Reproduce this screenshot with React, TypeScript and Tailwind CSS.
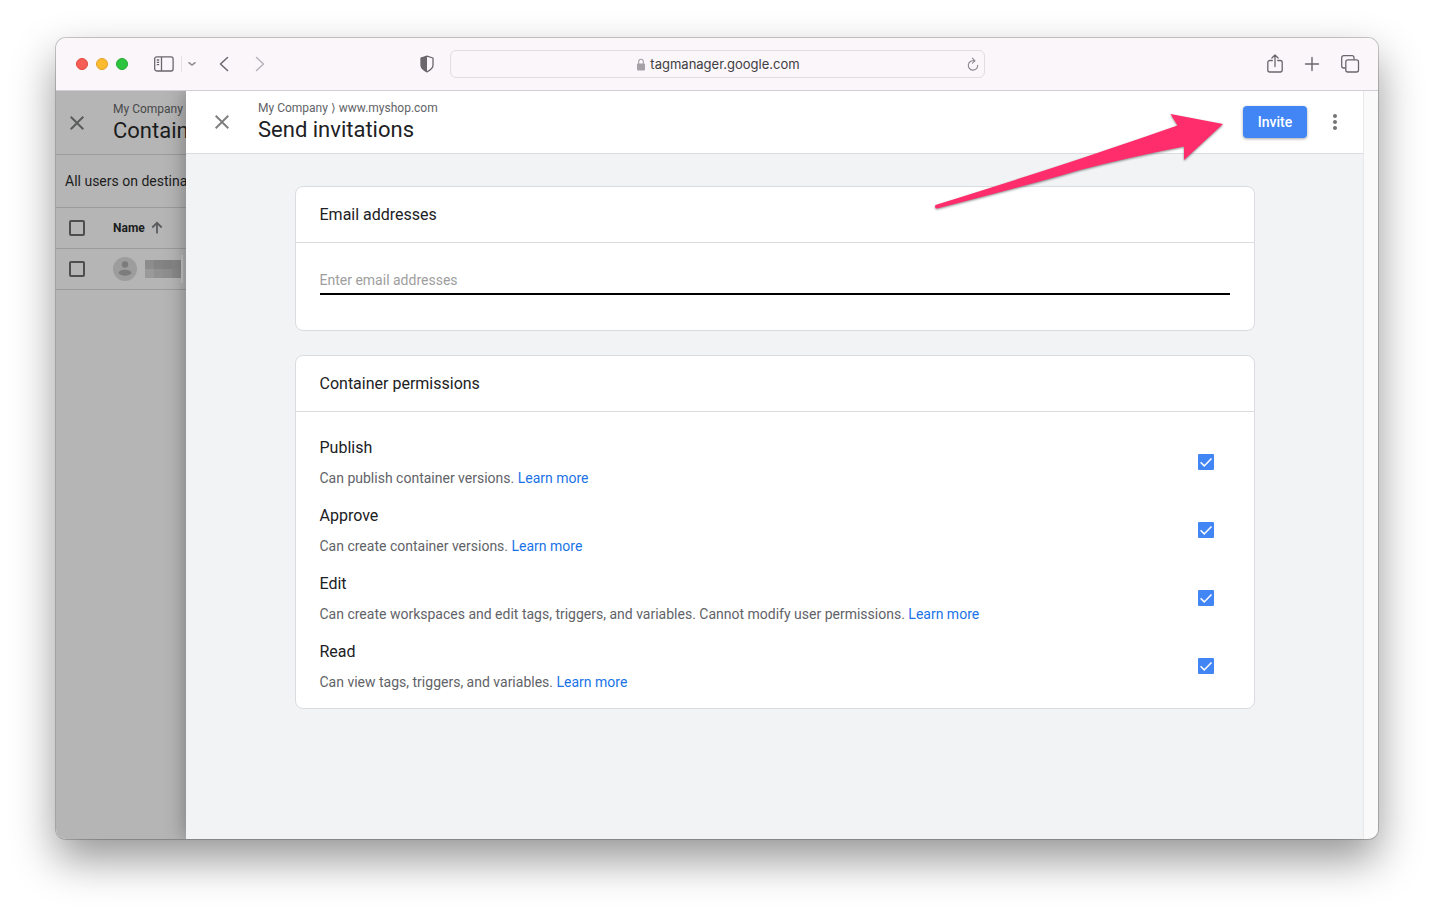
import { MdClose, MdMoreVert } from 'react-icons/md';

const permissions = [
  { id: 'publish', title: 'Publish', description: 'Can publish container versions.' },
  { id: 'approve', title: 'Approve', description: 'Can create container versions.' },
  {
    id: 'edit',
    title: 'Edit',
    description: 'Can create workspaces and edit tags, triggers, and variables. Cannot modify user permissions.',
  },
  { id: 'read', title: 'Read', description: 'Can view tags, triggers, and variables.' },
];

function BrowserToolbar() {
  return (
    <div className="relative z-10 grid h-[53px] shrink-0 grid-cols-[1fr_minmax(0,535px)_1fr] items-center border-b border-[#d2cfd3] bg-[#faf6fa] text-[#6b666c]">
      {/* Window and history controls */}
      <div className="flex items-center pl-5 pr-4">
        <div className="flex gap-2">
          <span className="h-3 w-3 rounded-full border border-[#e2463f] bg-[#f65e56]" />
          <span className="h-3 w-3 rounded-full border border-[#e3a12b] bg-[#fbbb2f]" />
          <span className="h-3 w-3 rounded-full border border-[#24a934] bg-[#2dc540]" />
        </div>
        <button aria-label="Sidebar" className="ml-[26px]">
          <svg width="20" height="16" viewBox="0 0 20 16" fill="none" stroke="currentColor" strokeWidth="1.3">
            <rect x="0.7" y="0.8" width="18.4" height="14.2" rx="2" />
            <path d="M7.5 1v14M2.8 4h2.4M2.8 6.3h2.4M2.8 8.6h2.4" />
          </svg>
        </button>
        <span className="ml-[7px] h-4 w-px bg-[#e6e2e6]" />
        <button aria-label="Tab groups" className="ml-[6px] text-[#8f8a90]">
          <svg width="8" height="6" viewBox="0 0 8 6" fill="none" stroke="currentColor" strokeWidth="1.5" strokeLinecap="round">
            <path d="M0.9 1.7L4 4.1l3.1-2.4" />
          </svg>
        </button>
        <button aria-label="Back" className="ml-[23px]">
          <svg width="10" height="16" viewBox="0 0 10 16" fill="none" stroke="currentColor" strokeWidth="1.5" strokeLinecap="round" strokeLinejoin="round">
            <path d="M8.5 1.5L1.5 8l7 6.5" />
          </svg>
        </button>
        <button aria-label="Forward" className="ml-[26px] text-[#b8b3b8]">
          <svg width="10" height="16" viewBox="0 0 10 16" fill="none" stroke="currentColor" strokeWidth="1.5" strokeLinecap="round" strokeLinejoin="round">
            <path d="M1.5 1.5L8.5 8l-7 6.5" />
          </svg>
        </button>
        <button aria-label="Privacy report" className="ml-auto">
          <svg width="14" height="18" viewBox="0 0 14 18">
            <path d="M7 1.2L1 3v7.2c0 3 3.2 5.2 6 6.6 2.800-1.400 6-3.600 6-6.600V3z" fill="none" stroke="currentColor" strokeWidth="1.3" strokeLinejoin="round" />
            <path d="M7 1.2L1 3v7.2c0 3 3.2 5.2 6 6.6z" fill="currentColor" />
          </svg>
        </button>
      </div>

      {/* Address bar */}
      <div className="flex h-7 items-center rounded-md border border-[#e0dce0] px-1">
        <div className="flex flex-1 items-center justify-center gap-1 pl-4">
          <svg width="10" height="13" viewBox="0 0 10 13" className="text-[#a5a1a6]">
            <rect x="1" y="5.5" width="8" height="7" rx="1" fill="currentColor" />
            <path d="M2.7 6V3.6a2.3 2.3 0 0 1 4.6 0V6" fill="none" stroke="currentColor" strokeWidth="1.1" />
          </svg>
          <span className="font-[Inter,sans-serif] text-[13px] leading-5 text-[#413d42]">tagmanager.google.com</span>
        </div>
        <button aria-label="Reload" className="text-[#8a868b]">
          <svg width="14" height="14" viewBox="0 0 14 14" fill="none" stroke="currentColor" strokeWidth="1.1" strokeLinecap="round" strokeLinejoin="round">
            <path d="M8 3.8A4.7 4.7 0 1 0 11.7 8.400M6.400 1.200L9 3.900 6.400 6.100" />
          </svg>
        </button>
      </div>

      {/* Page actions */}
      <div className="flex items-center justify-end gap-[18px] pr-[18px]">
        <button aria-label="Share">
          <svg width="18" height="20" viewBox="0 0 18 20" fill="none" stroke="currentColor" strokeWidth="1.3" strokeLinecap="round" strokeLinejoin="round">
            <path d="M6.3 6.5H3.8a2 2 0 0 0-2 2V16a2 2 0 0 0 2 2h10.4a2 2 0 0 0 2-2V8.5a2 2 0 0 0-2-2h-2.5M9 12.5V1.2M5.9 4L9 1l3.1 3" />
          </svg>
        </button>
        <button aria-label="New tab">
          <svg width="20" height="20" viewBox="0 0 20 20" fill="none" stroke="currentColor" strokeWidth="1.4" strokeLinecap="round">
            <path d="M10 3.5v13M3.5 10h13" />
          </svg>
        </button>
        <button aria-label="Show tabs">
          <svg width="20" height="20" viewBox="0 0 20 20" fill="none" stroke="currentColor" strokeWidth="1.3">
            <rect x="5.8" y="5.8" width="12.7" height="12.2" rx="2" />
            <path d="M5.8 14H3.7a2 2 0 0 1-2-2V3.7a2 2 0 0 1 2-2H12a2 2 0 0 1 2 2v2.1" />
          </svg>
        </button>
      </div>
    </div>
  );
}

function UsersPage() {
  return (
    <aside className="w-[130px] shrink-0 overflow-hidden whitespace-nowrap bg-[#b5b5b5] text-[#1b1c1d]">
      <header className="flex h-16 items-center gap-6 border-b border-[#9b9b9b] pl-[9px]">
        <button aria-label="Close users" className="text-[#5a5b5c]">
          <MdClose size={24} />
        </button>
        <div>
          <p className="text-xs leading-4 text-[#48494b]">My Company</p>
          <h2 className="text-[22px] leading-7">Containers</h2>
        </div>
      </header>
      <p className="flex h-[53px] items-center border-b border-[#9b9b9b] pl-[9px] text-sm">
        All users on destination
      </p>
      <table className="w-full table-fixed text-left">
        <thead>
          <tr className="h-10 border-b border-[#9b9b9b]">
            <th className="w-[57px] pl-[13px]">
              <input type="checkbox" aria-label="Select all users" className="block h-4 w-4 appearance-none rounded-xs border-2 border-[#4d4e50]" />
            </th>
            <th className="text-xs font-bold">
              <span className="flex items-center gap-1">
                Name
                <svg width="16" height="16" viewBox="0 0 16 16" fill="none" stroke="#5a5b5c" strokeWidth="1.8" className="shrink-0">
                  <path d="M8 13.500V3M3.300 7.500L8 2.800l4.700 4.700" />
                </svg>
              </span>
            </th>
          </tr>
        </thead>
        <tbody>
          <tr className="h-[41px] border-b border-[#9b9b9b]">
            <td className="pl-[13px]">
              <input type="checkbox" aria-label="Select user" className="block h-4 w-4 appearance-none rounded-xs border-2 border-[#4d4e50]" />
            </td>
            <td>
              <div className="flex items-center">
                <svg width="24" height="24" viewBox="0 0 24 24" className="mr-2 shrink-0">
                  <circle cx="12" cy="12" r="12" fill="#9d9d9d" />
                  <circle cx="12" cy="7.5" r="3.2" fill="#7c7c7c" />
                  <path d="M5.5 16.200c0-2.400 4-3.500 6.500-3.500s6.500 1.100 6.500 3.500c-1.300 1.600-3.800 2.500-6.500 2.500s-5.200-.9-6.500-2.500z" fill="#7c7c7c" />
                </svg>
                {/* Redacted user name */}
                <div className="grid shrink-0 grid-cols-4">
                  <span className="h-[9px] w-[9px] bg-[#8c8c8c]" />
                  <span className="h-[9px] w-[9px] bg-[#848484]" />
                  <span className="h-[9px] w-[9px] bg-[#828282]" />
                  <span className="h-[9px] w-[9px] bg-[#868686]" />
                  <span className="h-[9px] w-[9px] bg-[#9a9a9a]" />
                  <span className="h-[9px] w-[9px] bg-[#919191]" />
                  <span className="h-[9px] w-[9px] bg-[#8e8e8e]" />
                  <span className="h-[9px] w-[9px] bg-[#898989]" />
                </div>
                <span className="h-7 w-[2px] shrink-0 bg-[#c4c4c4]" />
              </div>
            </td>
          </tr>
        </tbody>
      </table>
    </aside>
  );
}

function PermissionRow({ id, title, description }: { id: string; title: string; description: string }) {
  return (
    <div className="flex items-center justify-between gap-6">
      <div>
        <label htmlFor={id} className="block text-base leading-6">{title}</label>
        <p className="mt-2 text-sm leading-5 text-[#5f6368]">
          {description}{' '}
          <a href="#" className="text-[#1a73e8]">Learn more</a>
        </p>
      </div>
      <span className="relative h-4 w-4 shrink-0">
        <input id={id} type="checkbox" defaultChecked className="peer block h-4 w-4 appearance-none rounded-[1px] border-2 border-[#5f6368] checked:border-[#4285f4] checked:bg-[#4285f4]" />
        <svg viewBox="0 0 16 16" fill="none" stroke="white" strokeWidth="1.5" className="pointer-events-none absolute inset-0 hidden peer-checked:block">
          <path d="M2.6 8.300l3.600 3.600 7.300-7.500" />
        </svg>
      </span>
    </div>
  );
}

function InvitePanel() {
  return (
    <section className="relative min-w-0 flex-1 bg-[#f1f3f4] text-[#202124] shadow-[0_0_20px_rgba(0,0,0,0.35)]">
      <header className="flex h-[63px] items-center border-b border-[#dadce0] bg-white pl-6 pr-4">
        <button aria-label="Close" className="mr-6 text-[#808080]">
          <MdClose size={24} />
        </button>
        <div>
          <p className="text-xs leading-4 text-[#5f6368]">My Company ⟩ www.myshop.com</p>
          <h1 className="text-[22px] leading-7">Send invitations</h1>
        </div>
        <button className="ml-auto mr-4 h-8 w-16 rounded-sm bg-[#4285f4] text-sm font-medium text-white shadow-[0_1px_3px_rgba(0,0,0,0.35)]">
          Invite
        </button>
        <button aria-label="More options" className="text-[#757575]">
          <MdMoreVert size={24} />
        </button>
      </header>

      <div className="mx-auto flex max-w-[960px] flex-col gap-6 py-8">
        <div className="rounded-lg border border-[#dadce0] bg-white">
          <h2 className="flex h-14 items-center border-b border-[#dadce0] px-6 text-base">
            <label htmlFor="emails">Email addresses</label>
          </h2>
          <div className="px-6 pb-[35px] pt-6">
            <input
              id="emails"
              type="email"
              multiple
              placeholder="Enter email addresses"
              className="block h-7 w-full border-b-2 border-black text-sm outline-none placeholder:text-[#9e9e9e]"
            />
          </div>
        </div>

        <div className="rounded-lg border border-[#dadce0] bg-white">
          <h2 className="flex h-14 items-center border-b border-[#dadce0] px-6 text-base">Container permissions</h2>
          <div className="flex flex-col gap-4 pb-4 pl-6 pr-10 pt-6">
            {permissions.map((permission) => (
              <PermissionRow key={permission.id} {...permission} />
            ))}
          </div>
        </div>
      </div>

      {/* Callout arrow pointing at the Invite button */}
      <svg
        width="300"
        height="108"
        viewBox="0 0 300 108"
        className="pointer-events-none absolute right-[133px] top-[17px] drop-shadow-[0_1px_1px_rgba(0,0,0,0.45)]"
      >
        <path
          d="M5.5 97Q130 58 176 42Q212 30 247.500 17.500L240.500 6L293 16L254 52V38.500Q200 49 150 62Q110 74 7 100.500Q4 100 5.500 97z"
          fill="#ff2d6b"
        />
      </svg>
    </section>
  );
}

export default function App() {
  return (
    <div className="flex min-h-screen bg-white px-14 pb-[74px] pt-[38px] font-[Roboto,sans-serif]">
      <main className="flex min-w-0 flex-1 flex-col overflow-hidden rounded-[10px] shadow-[0_0_0_1px_rgba(0,0,0,0.2),0_20px_44px_rgba(0,0,0,0.42)]">
        <BrowserToolbar />
        <div className="flex flex-1">
          <UsersPage />
          <InvitePanel />
          <div className="relative w-[15px] shrink-0 border-l border-[#e8e8e8] bg-[#fafafa]" />
        </div>
      </main>
    </div>
  );
}
